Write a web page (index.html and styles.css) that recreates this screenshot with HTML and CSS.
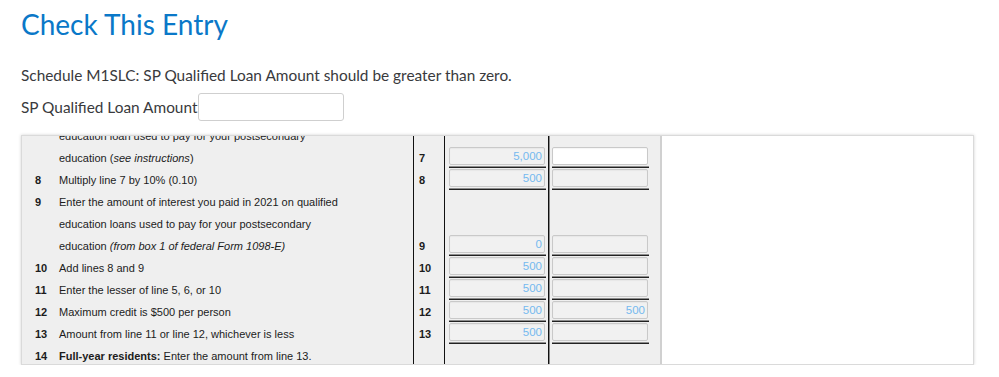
FILE: index.html
```html
<!DOCTYPE html>
<html>
<head>
<meta charset="utf-8">
<link rel="stylesheet" href="styles.css">
</head>
<body>
<div class="page">
  <h1 class="title">Check This Entry</h1>
  <p class="message">Schedule M1SLC: SP Qualified Loan Amount should be greater than zero.</p>
  <div class="field">
    <label class="field-label" for="amt">SP Qualified Loan Amount</label>
    <input class="field-input" id="amt" type="text">
  </div>
  <div class="frame">
    <div class="form">
      <div class="rows">
        <div class="row"><span class="num"></span><span class="txt">education loan used to pay for your postsecondary</span><span class="ln"></span><span class="c1"></span><span class="c2"></span></div>
        <div class="row"><span class="num"></span><span class="txt">education (<i>see instructions</i>)</span><span class="ln">7</span><span class="c1"><span class="box">5,000</span><span class="rule"></span></span><span class="c2"><span class="box white"></span><span class="rule"></span></span></div>
        <div class="row"><span class="num">8</span><span class="txt">Multiply line 7 by 10% (0.10)</span><span class="ln">8</span><span class="c1"><span class="box">500</span><span class="rule"></span></span><span class="c2"><span class="box"></span><span class="rule"></span></span></div>
        <div class="row"><span class="num">9</span><span class="txt">Enter the amount of interest you paid in 2021 on qualified</span><span class="ln"></span><span class="c1"></span><span class="c2"></span></div>
        <div class="row"><span class="num"></span><span class="txt">education loans used to pay for your postsecondary</span><span class="ln"></span><span class="c1"></span><span class="c2"></span></div>
        <div class="row"><span class="num"></span><span class="txt">education <i>(from box 1 of federal Form 1098-E)</i></span><span class="ln">9</span><span class="c1"><span class="box">0</span><span class="rule"></span></span><span class="c2"><span class="box"></span><span class="rule"></span></span></div>
        <div class="row"><span class="num">10</span><span class="txt">Add lines 8 and 9</span><span class="ln">10</span><span class="c1"><span class="box">500</span><span class="rule"></span></span><span class="c2"><span class="box"></span><span class="rule"></span></span></div>
        <div class="row"><span class="num">11</span><span class="txt">Enter the lesser of line 5, 6, or 10</span><span class="ln">11</span><span class="c1"><span class="box">500</span><span class="rule"></span></span><span class="c2"><span class="box"></span><span class="rule"></span></span></div>
        <div class="row"><span class="num">12</span><span class="txt">Maximum credit is $500 per person</span><span class="ln">12</span><span class="c1"><span class="box">500</span><span class="rule"></span></span><span class="c2"><span class="box">500</span><span class="rule"></span></span></div>
        <div class="row"><span class="num">13</span><span class="txt">Amount from line 11 or line 12, whichever is less</span><span class="ln">13</span><span class="c1"><span class="box">500</span><span class="rule"></span></span><span class="c2"><span class="box"></span><span class="rule"></span></span></div>
        <div class="row"><span class="num">14</span><span class="txt"><b>Full-year residents:</b> Enter the amount from line 13.</span><span class="ln"></span><span class="c1"></span><span class="c2"></span></div>
      </div>
    </div>
    <div class="blank"></div>
  </div>
</div>
</body>
</html>
```
FILE: styles.css
```css
html, body {
  margin: 0;
  padding: 0;
  background: #ffffff;
}
.page {
  padding: 0 0 0 21px;
  font-family: Lato, "Noto Sans", sans-serif;
  color: #393a3d;
}
.title {
  margin: 0;
  padding-top: 7px;
  font-size: 28px;
  line-height: 34px;
  font-weight: 400;
  color: #0a78c8;
}
.message {
  margin: 0;
  padding-top: 24px;
  font-size: 15.4px;
  line-height: 20px;
}
.field {
  display: flex;
  align-items: center;
  margin-top: 8px;
  height: 28px;
}
.field-label {
  font-size: 15.4px;
  line-height: 20px;
}
.field-input {
  box-sizing: border-box;
  width: 146px;
  height: 28px;
  margin: 0 0 0 1px;
  border: 1px solid #cfcfcf;
  border-radius: 3px;
  background: #fff;
  padding: 0;
}
.frame {
  box-sizing: border-box;
  margin-top: 14px;
  width: 953px;
  height: 230px;
  border: 1px solid #dadada;
  box-shadow: 0 0 3px rgba(0, 0, 0, 0.18);
  display: flex;
  overflow: hidden;
}
.form {
  width: 638px;
  flex: none;
  background: #efefef;
  border-right: 2px solid #d0d0d0;
  overflow: hidden;
}
.blank {
  flex: 1;
  background: #fff;
}
.rows {
  margin-top: -11px;
  font-family: "Liberation Sans", Arial, sans-serif;
  font-size: 11px;
  color: #1c1c1c;
}
.row {
  display: grid;
  grid-template-columns: 37px 354px 31px 104px 112px;
  height: 22px;
}
.row > span {
  display: block;
  box-sizing: border-box;
  line-height: 22px;
}
.num {
  padding-left: 13px;
  font-weight: 700;
}
.txt {
  white-space: nowrap;
}
.ln {
  border-left: 1px solid #111;
  padding-left: 5px;
  font-weight: 700;
}
.c1 {
  border-left: 1px solid #111;
  padding-left: 4px;
}
.c2 {
  border-left: 1px solid #111;
  box-shadow: inset 1px 0 0 #8a8a8a;
  padding-left: 3px;
}
.box {
  display: block;
  box-sizing: border-box;
  width: 96px;
  height: 18px;
  border: 1px solid #c9c9c9;
  border-radius: 2px;
  background: #f1f1f1;
  box-shadow: inset 0 1px 1px rgba(0, 0, 0, 0.04);
  text-align: right;
  padding-right: 2px;
  font-family: "Liberation Sans", Arial, sans-serif;
  font-size: 11.5px;
  line-height: 16px;
  color: #75b9ef;
}
.box.white {
  background: #ffffff;
}
.rule {
  display: block;
  width: 97px;
  height: 2px;
  margin-top: 1px;
  background: linear-gradient(#8c8c8c 0 1px, #222 1px 2px);
}
```
